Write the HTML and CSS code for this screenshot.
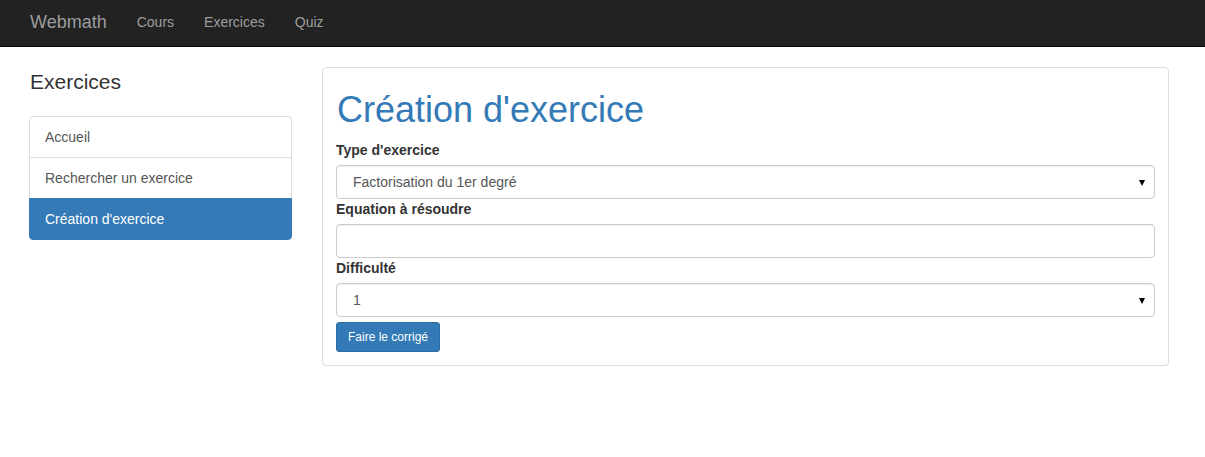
FILE: index.html
```html
<!DOCTYPE html>
<html lang="fr">
<head>
<meta charset="utf-8">
<title>Webmath</title>
<link rel="stylesheet" href="styles.css">
</head>
<body>
<nav class="navbar">
  <a class="brand" href="#">Webmath</a>
  <a class="nav-link" href="#">Cours</a>
  <a class="nav-link" href="#">Exercices</a>
  <a class="nav-link" href="#">Quiz</a>
</nav>
<div class="page">
  <aside class="sidebar">
    <h3 class="side-title">Exercices</h3>
    <div class="list-group">
      <a class="list-item" href="#">Accueil</a>
      <a class="list-item" href="#">Rechercher un exercice</a>
      <a class="list-item active" href="#">Création d'exercice</a>
    </div>
  </aside>
  <main class="panel">
    <h1 class="title">Création d'exercice</h1>
    <form class="form">
      <label class="label">Type d'exercice</label>
      <div class="select-wrap">
        <select class="control select">
          <option>Factorisation du 1er degré</option>
        </select>
      </div>
      <label class="label">Equation à résoudre</label>
      <input class="control" type="text">
      <label class="label">Difficulté</label>
      <div class="select-wrap">
        <select class="control select">
          <option>1</option>
        </select>
      </div>
      <div class="actions">
        <button class="btn" type="button">Faire le corrigé</button>
      </div>
    </form>
  </main>
</div>
</body>
</html>
```
FILE: styles.css
```css
* { box-sizing: border-box; }
html, body { margin: 0; padding: 0; }
body {
  font-family: "Liberation Sans", Arial, sans-serif;
  font-size: 14px;
  line-height: 20px;
  color: #333;
  background: #fff;
}
a { text-decoration: none; }

.navbar {
  height: 47px;
  background: #222;
  border-bottom: 1px solid #080808;
  display: flex;
  align-items: center;
  padding-left: 15px;
}
.brand {
  color: #9d9d9d;
  font-size: 18px;
  line-height: 20px;
  padding: 0 15px;
  margin-top: -3px;
}
.nav-link {
  color: #9d9d9d;
  font-size: 14px;
  line-height: 20px;
  padding: 0 15px;
  margin-top: -2px;
}

.page {
  display: grid;
  grid-template-columns: 263px 1fr;
  column-gap: 30px;
  padding: 20px 36px 0 29px;
  align-items: start;
}

.side-title {
  font-size: 21px;
  font-weight: 400;
  line-height: 22px;
  margin: 4px 0 23px 1px;
  color: #333;
}
.list-group {
  display: flex;
  flex-direction: column;
}
.list-item {
  display: block;
  padding: 10px 15px;
  border: 1px solid #ddd;
  margin-bottom: -1px;
  color: #555;
  background: #fff;
  line-height: 20px;
}
.list-item:first-child { border-radius: 4px 4px 0 0; }
.list-item:last-child { border-radius: 0 0 4px 4px; margin-bottom: 0; }
.list-item.active {
  background: #337ab7;
  border-color: #337ab7;
  color: #fff;
}

.panel {
  border: 1px solid #ddd;
  border-radius: 4px;
  padding: 15px 13px 13px;
  box-shadow: 0 1px 1px rgba(0,0,0,.05);
}
.title {
  color: #337ab7;
  font-size: 36px;
  font-weight: 400;
  line-height: 1.1;
  margin: 7px 0 10px 1px;
}
.form { display: flex; flex-direction: column; }
.label {
  font-weight: 700;
  line-height: 20px;
  margin-bottom: 5px;
  color: #333;
}
.control {
  display: block;
  width: 100%;
  height: 34px;
  padding: 6px 12px;
  font-family: inherit;
  font-size: 14px;
  color: #555;
  background: #fff;
  border: 1px solid #ccc;
  border-radius: 4px;
  box-shadow: inset 0 1px 1px rgba(0,0,0,.075);
  outline: none;
}
.select-wrap { position: relative; }
.select {
  -webkit-appearance: none;
  appearance: none;
  padding-left: 16px;
}
.select-wrap::after {
  content: "";
  position: absolute;
  right: 10px;
  top: 15px;
  border-left: 3.5px solid transparent;
  border-right: 3.5px solid transparent;
  border-top: 6px solid #000;
  pointer-events: none;
}
.actions { margin-top: 5px; display: flex; }
.btn {
  font-family: inherit;
  font-size: 12px;
  line-height: 18px;
  padding: 5px 11px;
  color: #fff;
  background: #337ab7;
  border: 1px solid #2e6da4;
  border-radius: 3px;
  cursor: pointer;
}
```
